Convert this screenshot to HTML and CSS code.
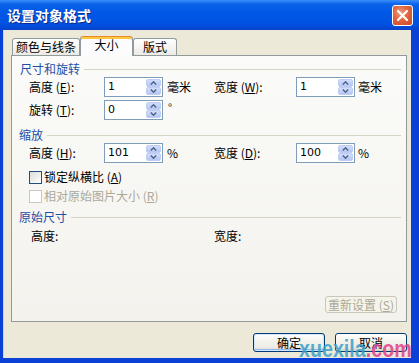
FILE: index.html
```html
<!DOCTYPE html>
<html lang="zh-CN">
<head>
<meta charset="utf-8">
<title>设置对象格式</title>
<link rel="stylesheet" href="styles.css">
</head>
<body>
<div class="window">
  <div class="titlebar">
    <span class="title">设置对象格式</span>
    <span class="close">
      <svg width="21" height="21" viewBox="0 0 21 21"><path d="M6 6 L15 15 M15 6 L6 15" stroke="#fff" stroke-width="2.2" stroke-linecap="round"/></svg>
    </span>
  </div>
  <div class="client">
    <div class="tabs">
      <div class="tab t1">颜色与线条</div>
      <div class="tab active t2">大小</div>
      <div class="tab t3">版式</div>
    </div>
    <div class="panel">
      <div class="group-head g1"><span class="gtitle">尺寸和旋转</span><i class="rule"></i></div>
      <div class="row r1">
        <span class="lbl">高度 (<u>E</u>):</span>
        <span class="spin"><span class="val">1</span><span class="spinbtn"><b class="half"><svg width="7" height="4" viewBox="0 0 7 4"><path d="M0.8 3.4 L3.5 0.8 L6.2 3.4" fill="none" stroke="#4d6185" stroke-width="1.4"/></svg></b><b class="half"><svg width="7" height="4" viewBox="0 0 7 4"><path d="M0.8 0.6 L3.5 3.2 L6.2 0.6" fill="none" stroke="#4d6185" stroke-width="1.4"/></svg></b></span></span>
        <span class="unit">毫米</span>
        <span class="lbl">宽度 (<u>W</u>):</span>
        <span class="spin"><span class="val">1</span><span class="spinbtn"><b class="half"><svg width="7" height="4" viewBox="0 0 7 4"><path d="M0.8 3.4 L3.5 0.8 L6.2 3.4" fill="none" stroke="#4d6185" stroke-width="1.4"/></svg></b><b class="half"><svg width="7" height="4" viewBox="0 0 7 4"><path d="M0.8 0.6 L3.5 3.2 L6.2 0.6" fill="none" stroke="#4d6185" stroke-width="1.4"/></svg></b></span></span>
        <span class="unit unit2">毫米</span>
      </div>
      <div class="row r2">
        <span class="lbl">旋转 (<u>T</u>):</span>
        <span class="spin"><span class="val">0</span><span class="spinbtn"><b class="half"><svg width="7" height="4" viewBox="0 0 7 4"><path d="M0.8 3.4 L3.5 0.8 L6.2 3.4" fill="none" stroke="#4d6185" stroke-width="1.4"/></svg></b><b class="half"><svg width="7" height="4" viewBox="0 0 7 4"><path d="M0.8 0.6 L3.5 3.2 L6.2 0.6" fill="none" stroke="#4d6185" stroke-width="1.4"/></svg></b></span></span>
        <span class="unit deg">°</span>
      </div>

      <div class="group-head g2"><span class="gtitle">缩放</span><i class="rule"></i></div>
      <div class="row r3">
        <span class="lbl">高度 (<u>H</u>):</span>
        <span class="spin"><span class="val">101</span><span class="spinbtn"><b class="half"><svg width="7" height="4" viewBox="0 0 7 4"><path d="M0.8 3.4 L3.5 0.8 L6.2 3.4" fill="none" stroke="#4d6185" stroke-width="1.4"/></svg></b><b class="half"><svg width="7" height="4" viewBox="0 0 7 4"><path d="M0.8 0.6 L3.5 3.2 L6.2 0.6" fill="none" stroke="#4d6185" stroke-width="1.4"/></svg></b></span></span>
        <span class="unit">%</span>
        <span class="lbl">宽度 (<u>D</u>):</span>
        <span class="spin"><span class="val">100</span><span class="spinbtn"><b class="half"><svg width="7" height="4" viewBox="0 0 7 4"><path d="M0.8 3.4 L3.5 0.8 L6.2 3.4" fill="none" stroke="#4d6185" stroke-width="1.4"/></svg></b><b class="half"><svg width="7" height="4" viewBox="0 0 7 4"><path d="M0.8 0.6 L3.5 3.2 L6.2 0.6" fill="none" stroke="#4d6185" stroke-width="1.4"/></svg></b></span></span>
        <span class="unit unit2">%</span>
      </div>
      <div class="check c1"><span class="box"></span><span>锁定纵横比 (<u>A</u>)</span></div>
      <div class="check c2 disabled"><span class="box"></span><span>相对原始图片大小 (<u>R</u>)</span></div>

      <div class="group-head g3"><span class="gtitle">原始尺寸</span><i class="rule"></i></div>
      <div class="orig">
        <span>高度:</span>
        <span>宽度:</span>
      </div>

      <div class="reset">重新设置 (<u>S</u>)</div>
    </div>
    <div class="footer">
      <button class="btn default">确定</button>
      <button class="btn">取消</button>
    </div>
  </div>
  <div class="watermark"><span class="wm1">xuexila</span><span class="wm2">.com</span></div>
</div>
</body>
</html>
```

FILE: styles.css
```css
* { box-sizing: border-box; }

html, body {
  margin: 0;
  padding: 0;
  background: #ffffff;
}

body {
  font-family: "Noto Sans CJK SC", "Noto Sans", sans-serif;
  font-size: 12px;
  color: #000;
}

.window {
  position: relative;
  width: 419px;
  height: 363px;
  display: flex;
  flex-direction: column;
  background: #0a40d6;
  overflow: hidden;
}

.titlebar {
  height: 30px;
  flex: none;
  display: flex;
  align-items: center;
  background: linear-gradient(to bottom, #3c8ef8 0px, #0c63ea 4px, #0057e6 12px, #0054e2 22px, #004bd9 27px, #0a42c8 30px);
}

.title {
  padding-left: 7px;
  font-size: 14px;
  font-weight: bold;
  color: #ffffff;
  line-height: 16px;
  text-shadow: 1px 1px 0 #0b2a8a;
}

.close {
  margin-left: auto;
  margin-right: 6px;
  width: 21px;
  height: 21px;
  border: 1px solid #ffffff;
  border-radius: 3px;
  background: radial-gradient(circle at 40% 35%, #ee9a7e 0%, #e0653f 45%, #c9472a 100%);
  display: flex;
  align-items: center;
  justify-content: center;
}

.close svg { display: block; margin: -1px; }

.client {
  flex: 1;
  margin: 0 8px 5px 3px;
  background: #ece9d8;
  padding: 6px 4px 6px 7px;
  display: flex;
  flex-direction: column;
  border-left: 1px solid #d8d4c0;
}

.tabs {
  height: 19px;
  flex: none;
  display: flex;
  align-items: flex-end;
  padding-left: 1px;
}

.tab {
  height: 17px;
  border: 1px solid #919b9c;
  border-bottom: none;
  border-radius: 3px 3px 0 0;
  background: linear-gradient(to bottom, #ffffff, #eceae3);
  display: flex;
  align-items: center;
  justify-content: center;
  line-height: 14px;
}

.t1 { width: 68px; }
.t2 { width: 53px; }
.t3 { width: 44px; }

.tab.active {
  height: 20px;
  margin-bottom: -1px;
  position: relative;
  z-index: 1;
  background: #fcfcfe;
  border-top: 1px solid #e68b2c;
  box-shadow: inset 0 2px 0 #ffc73c;
  padding-bottom: 3px;
}

.panel {
  height: 267px;
  flex: none;
  border: 1px solid #919b9c;
  background: linear-gradient(to bottom, #fbfbf9, #f3f2ed);
  display: flex;
  flex-direction: column;
  padding-top: 6px;
}

.group-head {
  height: 14px;
  display: flex;
  align-items: center;
  padding-left: 7px;
  padding-right: 5px;
}

.gtitle {
  color: #1d4ea6;
  line-height: 14px;
  white-space: nowrap;
}

.rule {
  flex: 1;
  height: 1px;
  margin-left: 4px;
  background: #d5d3c6;
}

.g1 { margin-top: 0; padding-left: 8px; }
.g2 { margin-top: 8px; }
.g3 { margin-top: 7px; }

.row {
  height: 20px;
  display: grid;
  grid-template-columns: 75px 59px 51px 82px 59px 1fr;
  align-items: center;
  padding-left: 17px;
}

.r1 { margin-top: 1px; }
.r2 { margin-top: 3px; }
.r3 { margin-top: 1px; }

.lbl { white-space: nowrap; line-height: 14px; }

.spin {
  height: 20px;
  border: 1px solid #7f9db9;
  background: #ffffff;
  display: flex;
  align-items: center;
  padding: 1px;
}

.val {
  flex: 1;
  padding-left: 2px;
  line-height: 14px;
  font-family: "DejaVu Sans", "Noto Sans", sans-serif;
  font-size: 11px;
}

.spinbtn {
  width: 15px;
  height: 16px;
  display: flex;
  flex-direction: column;
  gap: 0;
}

.half {
  flex: 1;
  border-radius: 2px;
  background: linear-gradient(to bottom, #d2ddfb, #b5c6f0);
  border: 1px solid #bfcdf3;
  display: flex;
  align-items: center;
  justify-content: center;
}

.half svg { display: block; }

.unit { padding-left: 4px; line-height: 14px; }
.unit2 { padding-left: 3px; }
.deg { padding-left: 5px; margin-top: -6px; font-size: 11px; }

.check {
  height: 14px;
  display: flex;
  align-items: center;
  padding-left: 17px;
  line-height: 14px;
}

.c1 { margin-top: 7px; }
.c2 { margin-top: 5px; }

.box {
  width: 13px;
  height: 13px;
  border: 1px solid #1c5180;
  background: linear-gradient(135deg, #dcdcd7, #ffffff);
  margin-right: 2px;
  flex: none;
}

.disabled { color: #aca899; }
.disabled .box {
  border-color: #cac8bb;
  background: #ffffff;
}

.orig {
  margin-top: 5px;
  height: 14px;
  display: grid;
  grid-template-columns: 183px 1fr;
  align-items: center;
  padding-left: 19px;
  line-height: 14px;
}

.reset {
  margin-top: auto;
  margin-bottom: 8px;
  margin-right: 9px;
  align-self: flex-end;
  width: 72px;
  height: 17px;
  border: 1px solid #c9c7ba;
  border-radius: 3px;
  background: #f5f4ea;
  color: #aca899;
  display: flex;
  align-items: center;
  justify-content: center;
  line-height: 14px;
}

.footer {
  margin-top: 11px;
  height: 19px;
  display: flex;
  justify-content: flex-end;
  gap: 10px;
}

.btn {
  width: 72px;
  height: 19px;
  padding: 0;
  font-family: "Noto Sans CJK SC", "Noto Sans", sans-serif;
  font-size: 12px;
  line-height: 14px;
  color: #000;
  border: 1px solid #003c74;
  border-radius: 3px;
  background: linear-gradient(to bottom, #ffffff 0%, #f4f3ee 40%, #ecebe5 80%, #d6d0c5 100%);
}

.btn.default {
  box-shadow: inset 0 0 0 1px #cee7ff, inset 0 -1px 0 1px #98b8ea;
}

.watermark {
  position: absolute;
  left: 299px;
  top: 337px;
  height: 24px;
  line-height: 24px;
  font-family: "Liberation Sans", "Arial", sans-serif;
  font-size: 24px;
  font-weight: bold;
  white-space: nowrap;
  transform: scaleX(0.82);
  transform-origin: left top;
}

.wm1 { color: rgba(58, 160, 200, 0.85); }
.wm2 { color: rgba(226, 70, 143, 0.9); }
```
